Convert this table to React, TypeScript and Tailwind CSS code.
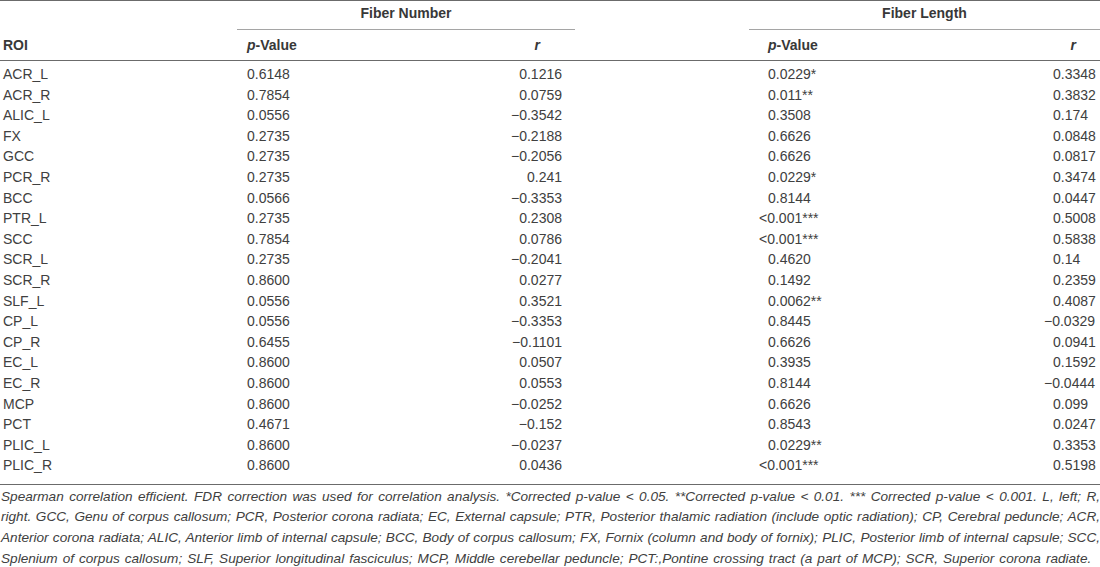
import React from 'react';

type Row = { roi: string; np: string; nr: string; lp: string; lr: string };

const rows: Row[] = [
  { roi: 'ACR_L', np: '0.6148', nr: '0.1216', lp: '0.0229*', lr: '0.3348' },
  { roi: 'ACR_R', np: '0.7854', nr: '0.0759', lp: '0.011**', lr: '0.3832' },
  { roi: 'ALIC_L', np: '0.0556', nr: '−0.3542', lp: '0.3508', lr: '0.174' },
  { roi: 'FX', np: '0.2735', nr: '−0.2188', lp: '0.6626', lr: '0.0848' },
  { roi: 'GCC', np: '0.2735', nr: '−0.2056', lp: '0.6626', lr: '0.0817' },
  { roi: 'PCR_R', np: '0.2735', nr: '0.241', lp: '0.0229*', lr: '0.3474' },
  { roi: 'BCC', np: '0.0566', nr: '−0.3353', lp: '0.8144', lr: '0.0447' },
  { roi: 'PTR_L', np: '0.2735', nr: '0.2308', lp: '<0.001***', lr: '0.5008' },
  { roi: 'SCC', np: '0.7854', nr: '0.0786', lp: '<0.001***', lr: '0.5838' },
  { roi: 'SCR_L', np: '0.2735', nr: '−0.2041', lp: '0.4620', lr: '0.14' },
  { roi: 'SCR_R', np: '0.8600', nr: '0.0277', lp: '0.1492', lr: '0.2359' },
  { roi: 'SLF_L', np: '0.0556', nr: '0.3521', lp: '0.0062**', lr: '0.4087' },
  { roi: 'CP_L', np: '0.0556', nr: '−0.3353', lp: '0.8445', lr: '−0.0329' },
  { roi: 'CP_R', np: '0.6455', nr: '−0.1101', lp: '0.6626', lr: '0.0941' },
  { roi: 'EC_L', np: '0.8600', nr: '0.0507', lp: '0.3935', lr: '0.1592' },
  { roi: 'EC_R', np: '0.8600', nr: '0.0553', lp: '0.8144', lr: '−0.0444' },
  { roi: 'MCP', np: '0.8600', nr: '−0.0252', lp: '0.6626', lr: '0.099' },
  { roi: 'PCT', np: '0.4671', nr: '−0.152', lp: '0.8543', lr: '0.0247' },
  { roi: 'PLIC_L', np: '0.8600', nr: '−0.0237', lp: '0.0229**', lr: '0.3353' },
  { roi: 'PLIC_R', np: '0.8600', nr: '0.0436', lp: '<0.001***', lr: '0.5198' },
];

const notes = [
  'Spearman correlation efficient. FDR correction was used for correlation analysis. *Corrected p-value < 0.05. **Corrected p-value < 0.01. *** Corrected p-value < 0.001. L, left; R,',
  'right. GCC, Genu of corpus callosum; PCR, Posterior corona radiata; EC, External capsule; PTR, Posterior thalamic radiation (include optic radiation); CP, Cerebral peduncle; ACR,',
  'Anterior corona radiata; ALIC, Anterior limb of internal capsule; BCC, Body of corpus callosum; FX, Fornix (column and body of fornix); PLIC, Posterior limb of internal capsule; SCC,',
  'Splenium of corpus callosum; SLF, Superior longitudinal fasciculus; MCP, Middle cerebellar peduncle; PCT:,Pontine crossing tract (a part of MCP); SCR, Superior corona radiate.',
];

const cols = 'grid grid-cols-[247px_153px_162px_206px_285px_47px]';

export default function App() {
  return (
    <div
      className="w-[1100px] h-[567px] bg-white text-[#404040] text-[14px] overflow-hidden"
      style={{ fontFamily: '"Liberation Sans", Arial, sans-serif' }}
    >
      <div className="border-t border-[#6b6b6b]">
        <div className="flex h-[29px] items-end font-bold text-[#383838]">
          <div className="w-[237px]" />
          <div className="w-[338px] text-center pb-[5px] border-b border-[#a5a5a5]">Fiber Number</div>
          <div className="w-[174px]" />
          <div className="flex-1 text-center pb-[5px] border-b border-[#a5a5a5]">Fiber Length</div>
        </div>
        <div className={`${cols} h-[31px] items-center font-bold text-[#383838] border-b border-[#6b6b6b]`}>
          <div className="pl-[3px]">ROI</div>
          <div>
            <i>p</i>-Value
          </div>
          <div className="text-right pr-[22px]">
            <i>r</i>
          </div>
          <div />
          <div>
            <i>p</i>-Value
          </div>
          <div className="text-right pr-[24px]">
            <i>r</i>
          </div>
        </div>
        <div className="pt-[3px] pb-[8px] border-b border-[#6b6b6b]">
          {rows.map((r) => (
            <div key={r.roi} className={`${cols} h-[20.6px] items-center`}>
              <div className="pl-[3px]">{r.roi}</div>
              <div>{r.np}</div>
              <div className="text-right">{r.nr}</div>
              <div />
              <div className={r.lp.startsWith('<') ? '-ml-[9px] whitespace-nowrap' : 'whitespace-nowrap'}>{r.lp}</div>
              <div className={r.lr.startsWith('−') ? '-ml-[9px] whitespace-nowrap' : 'whitespace-nowrap'}>{r.lr}</div>
            </div>
          ))}
        </div>
        <div className="italic leading-[20.6px] pt-[2px] pl-[1px] text-[13.6px]">
          {notes.map((line, i) => (
            <div
              key={i}
              className={
                i < notes.length - 1
                  ? 'text-justify [text-align-last:justify] whitespace-nowrap'
                  : 'whitespace-nowrap [word-spacing:1.2px]'
              }
            >
              {line}
            </div>
          ))}
        </div>
      </div>
    </div>
  );
}
